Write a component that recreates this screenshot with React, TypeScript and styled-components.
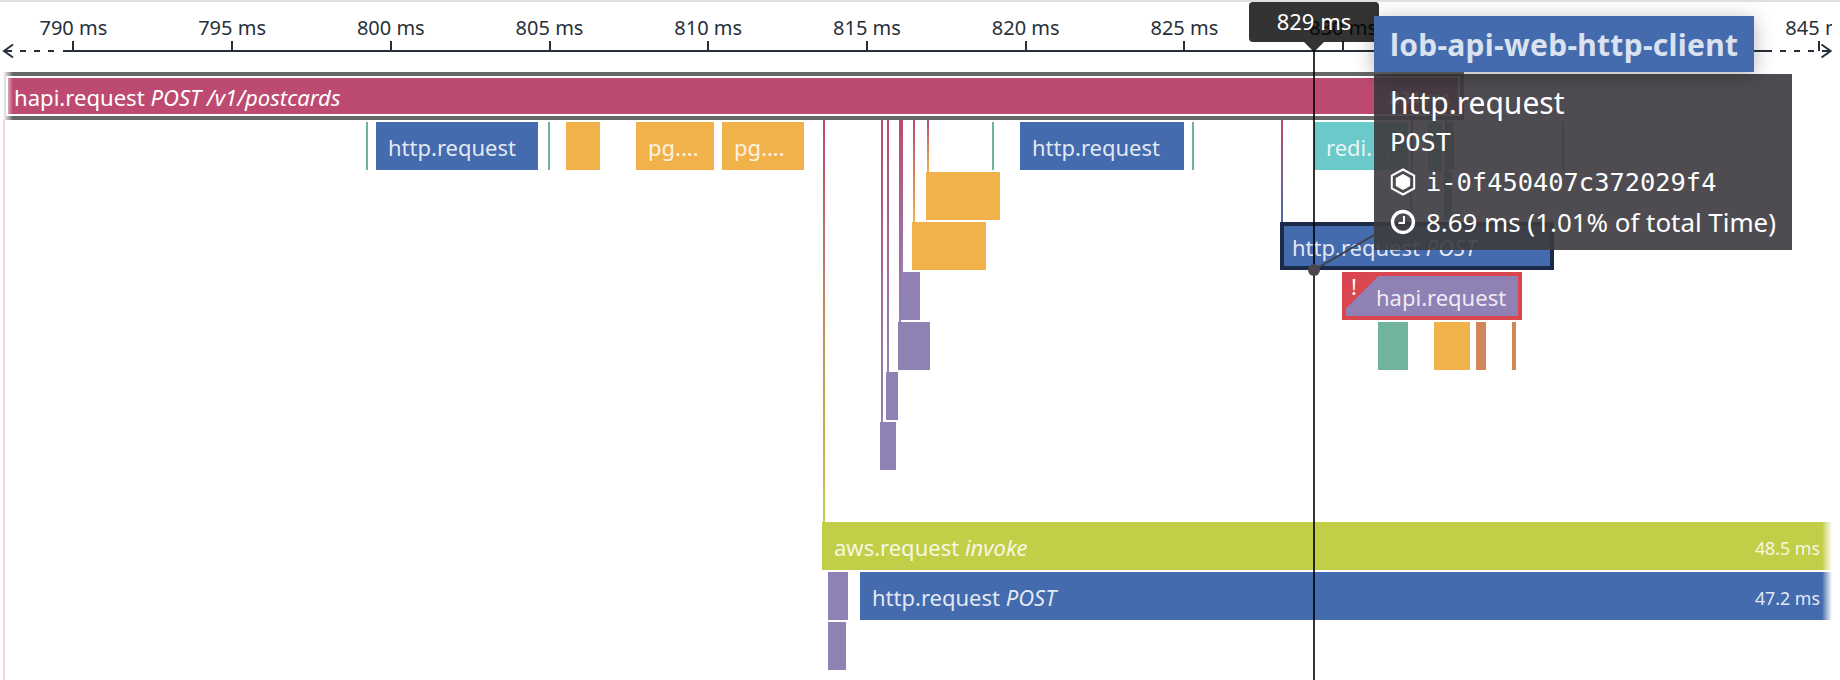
import React from "react";
import styled, { createGlobalStyle, css } from "styled-components";

const palette = {
  magenta: "#bd4a70",
  blue: "#446bae",
  amber: "#f2b24b",
  teal: "#6bc9ca",
  green: "#71b39b",
  purple: "#9081b5",
  lime: "#c2ce48",
  rust: "#d1865a",
  red: "#d94650",
  ink: "#27303a",
};

type Tone = keyof typeof palette;

const GlobalStyle = createGlobalStyle`
  * { box-sizing: border-box; }
  body {
    margin: 0;
    background: #fff;
    font-family: "Noto Sans", "Open Sans", sans-serif;
  }
`;

const Page = styled.main`
  position: relative;
  display: flex;
  flex-direction: column;
  width: 1840px;
  height: 680px;
  overflow: hidden;
  border-top: 2px solid #dfdee5;
  background: #fff;
`;

/* ---- time axis ---- */

const Axis = styled.header`
  position: relative;
  flex: none;
  height: 70px;
  width: 1832px;
  overflow: hidden;
`;

const Ticks = styled.div`
  display: flex;
  margin-left: -6px;
`;

const Tick = styled.div`
  flex: none;
  display: flex;
  flex-direction: column;
  align-items: center;
  width: 158.73px;
  padding-top: 12px;
  color: ${palette.ink};
  font-size: 20px;
  line-height: 27px;
  white-space: nowrap;

  &::after {
    content: "";
    width: 2px;
    height: 10px;
    background: ${palette.ink};
  }
`;

const AxisLine = styled.svg`
  position: absolute;
  left: 0;
  top: 40px;
`;

/* ---- flame graph ---- */

const Flame = styled.section`
  position: relative;
  display: flex;
  flex-direction: column;
  gap: 2px;
  width: 1832px;
  height: 608px;
`;

const Row = styled.div`
  display: flex;
  flex: none;
  height: 48px;
`;

const Span = styled.div<{ $gap: number; $width: number; $tone: Tone; $labelled: boolean; $state?: "root" | "selected" | "error" }>`
  position: relative;
  flex: none;
  display: flex;
  align-items: center;
  justify-content: space-between;
  margin-left: ${(p) => p.$gap}px;
  width: ${(p) => p.$width}px;
  padding: ${(p) => (p.$labelled ? "2px 12px 0" : "0")};
  overflow: hidden;
  background: ${(p) => palette[p.$tone]};
  color: rgba(255, 255, 255, 0.87);
  font-size: 22px;
  line-height: 30px;
  white-space: nowrap;

  ${(p) =>
    p.$state === "root" &&
    css`
      padding: 1px 8px 0 6px;
      border: 2px solid #fff;
      outline: 4px solid #666;
      height: 40px;
      margin-top: 4px;
      overflow: visible;
      color: #fff;
      font-size: 22.1px;
    `}
  ${(p) =>
    p.$state === "selected" &&
    css`
      border: 4px solid #1b2a49;
      padding: 2px 8px 0;
    `}
  ${(p) =>
    p.$state === "error" &&
    css`
      border: 4px solid ${palette.red};
      padding: 2px 0 0 30px;
    `}
`;

const Duration = styled.span`
  font-size: 17.8px;
  padding-top: 2px;
`;

const ErrorCorner = styled.span`
  position: absolute;
  left: 0;
  top: 0;
  width: 32px;
  height: 32px;
  padding-left: 5px;
  background: linear-gradient(135deg, ${palette.red} 50%, transparent 50.5%);
  color: #fff;
  font-size: 22px;
  line-height: 20px;
`;

const Connector = styled.i<{ $x: number; $depth: number; $tone: Tone }>`
  position: absolute;
  left: ${(p) => p.$x}px;
  top: 48px;
  width: 2px;
  height: ${(p) => p.$depth * 50 - 48}px;
  background: linear-gradient(${palette.magenta}, ${(p) => palette[p.$tone]});
`;

const TraceEdge = styled.i`
  position: absolute;
  left: 3px;
  top: 48px;
  width: 2px;
  height: 560px;
  background: rgba(189, 74, 112, 0.22);
`;

const EdgeFade = styled.i<{ $side: "left" | "right" }>`
  position: absolute;
  top: 0;
  height: ${(p) => (p.$side === "left" ? "48px" : "608px")};
  width: ${(p) => (p.$side === "left" ? "13px" : "10px")};
  ${(p) =>
    p.$side === "left"
      ? "left: 0; background: linear-gradient(to right, #fff 3px, rgba(255,255,255,0) 13px);"
      : "right: 0; background: linear-gradient(to left, #fff, rgba(255,255,255,0));"}
`;

/* ---- cursor ---- */

const CursorLine = styled.i`
  position: absolute;
  left: 1313px;
  top: 48px;
  width: 2px;
  height: 632px;
  background: rgba(0, 0, 0, 0.8);
`;

const CursorTag = styled.div`
  position: absolute;
  left: 1249px;
  top: 0;
  width: 130px;
  height: 40px;
  border-radius: 4px;
  background: rgba(0, 0, 0, 0.8);
  color: #fff;
  font-size: 22px;
  line-height: 39px;
  text-align: center;

  &::after {
    content: "";
    position: absolute;
    left: 55px;
    top: 40px;
    border: 10px solid transparent;
    border-top-color: rgba(0, 0, 0, 0.8);
    border-bottom: 0;
  }
`;

/* ---- tooltip ---- */

const Leader = styled.svg`
  position: absolute;
  left: 1300px;
  top: 218px;
`;

const Tooltip = styled.aside`
  position: absolute;
  left: 1374px;
  top: 14px;
  display: flex;
  flex-direction: column;
  align-items: flex-start;
  gap: 2px;
  color: #fff;
`;

const Service = styled.div`
  position: relative;
  z-index: 1;
  width: 380px;
  height: 56px;
  padding-left: 16px;
  background: ${palette.blue};
  box-shadow: 0 4px 20px rgba(0, 0, 0, 0.3);
  color: #dae1ef;
  font-size: 30px;
  letter-spacing: 0.28px;
  font-weight: 700;
  line-height: 58px;
  white-space: nowrap;
`;

const Details = styled.div`
  display: flex;
  flex-direction: column;
  width: 418px;
  height: 176px;
  padding: 8px 16px 0;
  background: rgba(61, 58, 63, 0.91);
  white-space: nowrap;
`;

const Operation = styled.div`
  height: 40px;
  font-size: 30px;
  line-height: 42px;
`;

const Meta = styled.div<{ $mono?: boolean }>`
  display: flex;
  align-items: center;
  gap: 10px;
  height: 40px;
  font-size: 25.9px;
  line-height: 40px;
  ${(p) => p.$mono && 'font-family: "DejaVu Sans Mono", monospace; font-size: 25.4px;'}
`;

type SpanData = {
  from: number;
  to: number;
  tone: Tone;
  label?: string;
  detail?: string;
  duration?: string;
  state?: "root" | "selected" | "error";
};

const rows: SpanData[][] = [
  [{ from: 6, to: 1460, tone: "magenta", label: "hapi.request", detail: "POST /v1/postcards", duration: "834 ms", state: "root" }],
  [
    { from: 366, to: 368, tone: "green" },
    { from: 376, to: 538, tone: "blue", label: "http.request" },
    { from: 548, to: 550, tone: "green" },
    { from: 566, to: 600, tone: "amber" },
    { from: 636, to: 714, tone: "amber", label: "pg...." },
    { from: 722, to: 804, tone: "amber", label: "pg...." },
    { from: 992, to: 994, tone: "green" },
    { from: 1020, to: 1184, tone: "blue", label: "http.request" },
    { from: 1192, to: 1194, tone: "green" },
    { from: 1314, to: 1408, tone: "teal", label: "redi...." },
    { from: 1411, to: 1413, tone: "green" },
    { from: 1428, to: 1442, tone: "teal" },
    { from: 1447, to: 1454, tone: "green" },
    { from: 1562, to: 1564, tone: "green" },
  ],
  [
    { from: 926, to: 1000, tone: "amber" },
    { from: 1410, to: 1412, tone: "green" },
    { from: 1444, to: 1452, tone: "green" },
  ],
  [
    { from: 912, to: 986, tone: "amber" },
    { from: 1280, to: 1554, tone: "blue", label: "http.request", detail: "POST", state: "selected" },
  ],
  [
    { from: 900, to: 920, tone: "purple" },
    { from: 1342, to: 1522, tone: "purple", label: "hapi.request", state: "error" },
  ],
  [
    { from: 898, to: 930, tone: "purple" },
    { from: 1378, to: 1408, tone: "green" },
    { from: 1434, to: 1470, tone: "amber" },
    { from: 1476, to: 1486, tone: "rust" },
    { from: 1512, to: 1516, tone: "rust" },
  ],
  [{ from: 886, to: 898, tone: "purple" }],
  [{ from: 880, to: 896, tone: "purple" }],
  [],
  [{ from: 822, to: 1832, tone: "lime", label: "aws.request", detail: "invoke", duration: "48.5 ms" }],
  [
    { from: 828, to: 848, tone: "purple" },
    { from: 860, to: 1832, tone: "blue", label: "http.request", detail: "POST", duration: "47.2 ms" },
  ],
  [{ from: 828, to: 846, tone: "purple" }],
];

const connectors: { x: number; depth: number; tone: Tone }[] = [
  { x: 823, depth: 9, tone: "lime" },
  { x: 881, depth: 7, tone: "purple" },
  { x: 887, depth: 6, tone: "purple" },
  { x: 899, depth: 5, tone: "purple" },
  { x: 901, depth: 4, tone: "purple" },
  { x: 913, depth: 3, tone: "amber" },
  { x: 927, depth: 2, tone: "amber" },
  { x: 1281, depth: 3, tone: "blue" },
  { x: 1411, depth: 2, tone: "green" },
  { x: 1445, depth: 2, tone: "green" },
];

const tickValues = Array.from({ length: 12 }, (_, i) => 790 + i * 5);

function FlameSpan({ span, previousEnd }: { span: SpanData; previousEnd: number }) {
  return (
    <Span
      $gap={span.from - previousEnd}
      $width={span.to - span.from}
      $tone={span.tone}
      $labelled={Boolean(span.label)}
      $state={span.state}
    >
      {span.state === "error" && <ErrorCorner>!</ErrorCorner>}
      {span.label && (
        <span>
          {span.label}
          {span.detail && <em> {span.detail}</em>}
        </span>
      )}
      {span.duration && <Duration>{span.duration}</Duration>}
    </Span>
  );
}

export default function App() {
  return (
    <>
      <GlobalStyle />
      <Page>
        <Axis>
          <Ticks>
            {tickValues.map((t) => (
              <Tick key={t}>{t} ms</Tick>
            ))}
          </Ticks>
          <AxisLine width="1832" height="20" fill="none" stroke={palette.ink} strokeWidth="2">
            <path d="M63 9H1772M20 9h6M34 9h6M48 9h6M1780 9h6M1794 9h6M1808 9h6" />
            <path d="M13 2.5L4 9l9 6.5M4 9h8M1821.5 2.5l9 6.5l-9 6.5M1830 9h-8" />
          </AxisLine>
        </Axis>
        <Flame>
          {rows.map((row, i) => (
            <Row key={i}>
              {row.map((span, j) => (
                <FlameSpan key={j} span={span} previousEnd={j ? row[j - 1].to : 0} />
              ))}
            </Row>
          ))}
          {connectors.map((c) => (
            <Connector key={c.x} $x={c.x} $depth={c.depth} $tone={c.tone} />
          ))}
          <TraceEdge />
          <EdgeFade $side="left" />
          <EdgeFade $side="right" />
        </Flame>
        <CursorLine />
        <CursorTag>829 ms</CursorTag>
        <Leader width="76" height="60">
          <path d="M14 50L74 15" stroke="#434145" strokeWidth="2" />
          <circle cx="14" cy="50" r="6" fill="#4a484c" />
        </Leader>
        <Tooltip>
          <Service>lob-api-web-http-client</Service>
          <Details>
            <Operation>http.request</Operation>
            <Meta $mono>POST</Meta>
            <Meta $mono>
              <svg width="26" height="28" viewBox="0 0 26 28">
                <path d="M13 1.500L24.200 7.600V20.400L13 26.500L1.800 20.400V7.600Z" fill="none" stroke="#fff" strokeWidth="2" />
                <path d="M13 6L20.200 10.100V17.900L13 22L5.800 17.900V10.100Z" fill="#fff" />
              </svg>
              i-0f450407c372029f4
            </Meta>
            <Meta>
              <svg width="26" height="26" viewBox="0 0 26 26" fill="none" stroke="#fff">
                <circle cx="13" cy="13" r="10.5" strokeWidth="3.4" />
                <path d="M14 7v7H8.500" strokeWidth="2" />
              </svg>
              8.69 ms (1.01% of total Time)
            </Meta>
          </Details>
        </Tooltip>
      </Page>
    </>
  );
}
